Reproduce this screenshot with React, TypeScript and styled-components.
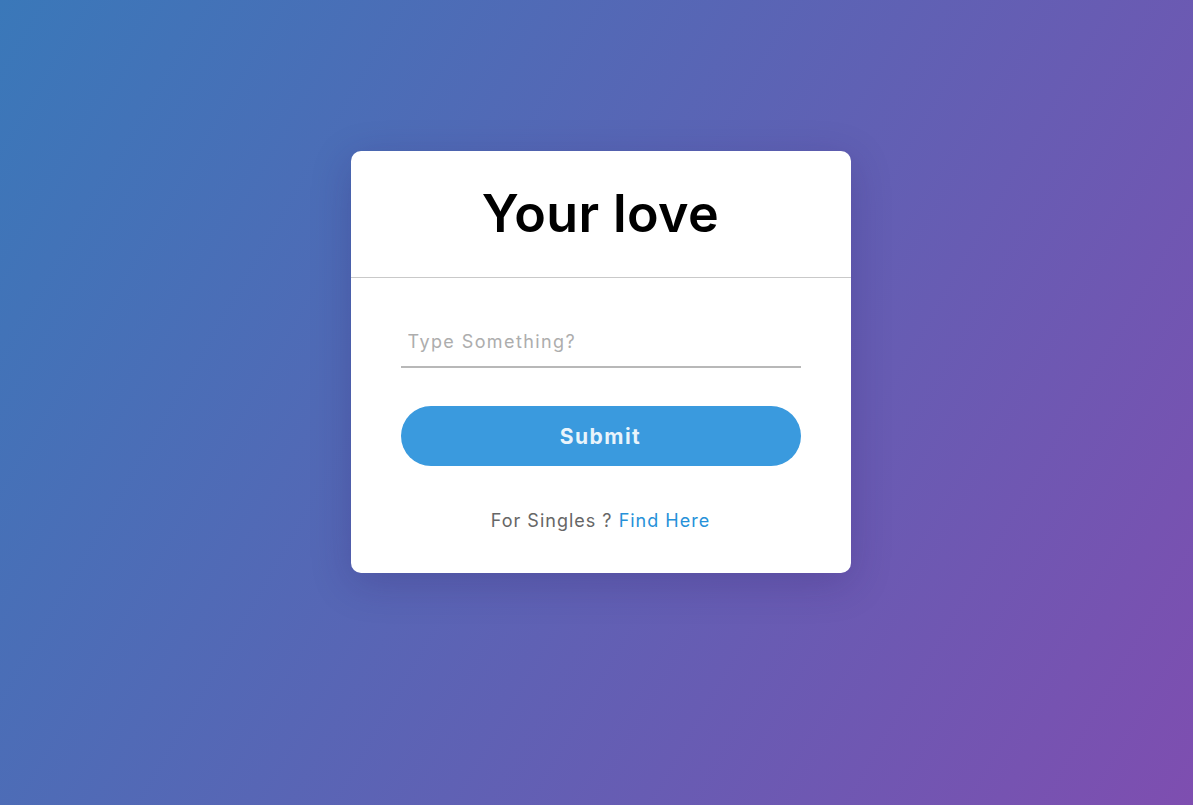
import React from "react";
import styled, { createGlobalStyle } from "styled-components";

const Global = createGlobalStyle`
  html, body { margin: 0; padding: 0; height: 100%; }
  body {
    font-family: "Inter", "Open Sans", sans-serif;
    background: linear-gradient(120deg, #3a78b9, #7e4eb0);
    min-height: 805px;
    overflow: hidden;
  }
`;

const Page = styled.div`
  display: flex;
  justify-content: center;
  padding: 151px 0 0 8px;
  height: 805px;
  box-sizing: border-box;
`;

const Card = styled.div`
  width: 500px;
  height: 422px;
  background: #fff;
  border-radius: 10px;
  box-shadow: 0 10px 40px rgba(40, 20, 90, 0.22);
  display: flex;
  flex-direction: column;
`;

const Title = styled.h1`
  margin: 0;
  height: 127px;
  display: flex;
  align-items: center;
  justify-content: center;
  border-bottom: 1px solid #c9c9c9;
  font-size: 52px;
  font-weight: 600;
  color: #000;
  letter-spacing: 0.4px;
  padding-bottom: 2px;
  box-sizing: border-box;
`;

const Form = styled.form`
  display: flex;
  flex-direction: column;
  padding: 48px 50px 0;
`;

const Field = styled.input`
  height: 42px;
  box-sizing: border-box;
  border: none;
  border-bottom: 2px solid #b8b8b8;
  outline: none;
  font-family: inherit;
  font-size: 18px;
  letter-spacing: 1.4px;
  padding: 0 7px 9px;
  color: #333;
  background: transparent;
  &::placeholder { color: #adadad; }
`;

const Button = styled.button`
  margin-top: 38px;
  height: 60px;
  border: none;
  border-radius: 30px;
  background: #3a9ade;
  color: #e9f4fb;
  font-family: inherit;
  font-size: 21px;
  font-weight: 700;
  letter-spacing: 1.5px;
  cursor: pointer;
`;

const Footer = styled.div`
  margin-top: 44px;
  text-align: center;
  font-size: 18px;
  letter-spacing: 1px;
  color: #666;
`;

const Link = styled.a`
  color: #2691d9;
  text-decoration: none;
`;

export default function App() {
  return (
    <>
      <Global />
      <Page>
        <Card>
          <Title>Your love</Title>
          <Form onSubmit={(e) => e.preventDefault()}>
            <Field type="text" placeholder="Type Something?" />
            <Button type="submit">Submit</Button>
            <Footer>
              For Singles ? <Link href="#">Find Here</Link>
            </Footer>
          </Form>
        </Card>
      </Page>
    </>
  );
}
